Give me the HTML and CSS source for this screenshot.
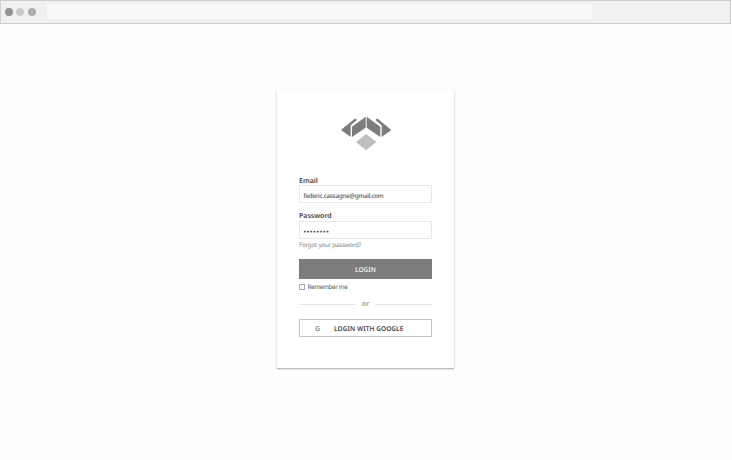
FILE: index.html
```html
<!DOCTYPE html>
<html lang="en">
<head>
<meta charset="utf-8">
<title>Login</title>
<link rel="stylesheet" href="styles.css">
</head>
<body>
<header class="browser">
  <span class="dot dot-close"></span><span class="dot dot-min"></span><span class="dot dot-max"></span>
  <div class="address"></div>
</header>
<main class="card">
  <svg class="logo" viewBox="1 0 153 105" aria-hidden="true">
    <g id="wing" fill="#7d7d7d">
      <path d="M1 42 41 9Q45 7 49 12L30 28V63Z"/>
      <path d="M34 32 75 2V35L34 63Z"/>
    </g>
    <use href="#wing" transform="matrix(-1 0 0 1 153 0)"/>
    <path fill="#bebebe" d="M76.500 54 107 78 76.500 103 46 78Z"/>
  </svg>
  <form class="form">
    <label class="label first">Email</label>
    <div class="field"><span class="address-text">federic.cassagne@gmail.com</span></div>
    <label class="label second">Password</label>
    <div class="field"><span class="bullets">••••••••</span></div>
    <a class="forgot">Forgot your password?</a>
    <div class="button"><span>LOGIN</span></div>
    <div class="remember"><i class="box"></i><span>Remember me</span></div>
    <div class="divider"><span>or</span></div>
    <div class="google"><span class="g">G</span><span class="g-text">LOGIN WITH GOOGLE</span></div>
  </form>
</main>
</body>
</html>
```
FILE: styles.css
```css
* { box-sizing: border-box; }
body { margin: 0; height: 460px; overflow: hidden; background: #fefefe; font-family: "Noto Sans", sans-serif; color: #444; text-rendering: geometricPrecision; }
.browser { width: 731px; height: 24px; display: flex; align-items: center; background: #f0f0f0; border: 1px solid #cfcfcf; padding-left: 4px; }
.dot { width: 8px; height: 8px; border-radius: 50%; margin-right: 3px; }
.dot-close { background: #929292; }
.dot-min { background: #c9c9c9; margin-right: 4px; }
.dot-max { background: #adadad; margin-right: 11px; }
.address { width: 545px; height: 15px; margin-top: -1px; background: #f9f9f9; }
.card { width: 177px; height: 278px; margin: 66px 0 0 277px; padding: 26px 22px 0 22px; background: #fff; box-shadow: 0 1px 1px #bdbdbd, 0 1px 3px rgba(0,0,0,.12); }
.logo { display: block; width: 51px; height: 35px; margin: 0 0 0 42px; }
.form { width: 133px; margin-top: 24px; white-space: nowrap; }
.label { display: block; height: 10px; font-size: 7px; line-height: 12px; font-weight: 600; }
.first { line-height: 13px; }
.second { margin-top: 8px; }
.field { height: 18px; border: 1px solid #e8e8e8; padding: 2px 0 0 3.500px; font-size: 6.300px; line-height: 16px; font-weight: 500; }
.address-text { letter-spacing: -.29px; color: #555; }
.bullets { font-size: 6.500px; letter-spacing: .800px; color: #444; font-weight: 600; }
.forgot { display: block; height: 10px; margin-top: 1px; font-size: 6.300px; line-height: 9px; color: #888; letter-spacing: -.26px; }
.button { height: 20px; margin-top: 9px; background: #7c7c7c; color: #eee; text-align: center; font-size: 6.500px; line-height: 21px; font-weight: 600; }
.remember { height: 10px; margin-top: 3px; display: flex; align-items: center; font-size: 6.300px; line-height: 10px; color: #555; letter-spacing: -.35px; }
.box { width: 6px; height: 6px; margin: 0 2.500px 0 0; border: 1px solid #aaa; }
.divider { height: 10px; margin-top: 7px; display: flex; align-items: center; gap: 6px; font-size: 7px; line-height: 10px; color: #999; font-weight: 600; }
.divider span { padding-top: 1px; }
.divider::before, .divider::after { content: ""; flex: 1; height: 1px; background: #e5e5e5; }
.google { height: 18px; margin-top: 10px; display: flex; align-items: center; border: 1px solid #c4c4c4; padding-left: 15px; font-weight: 600; font-size: 6.500px; letter-spacing: .07px; }
.g { width: 19px; padding-top: 2px; font-size: 7px; color: #888; }
```
